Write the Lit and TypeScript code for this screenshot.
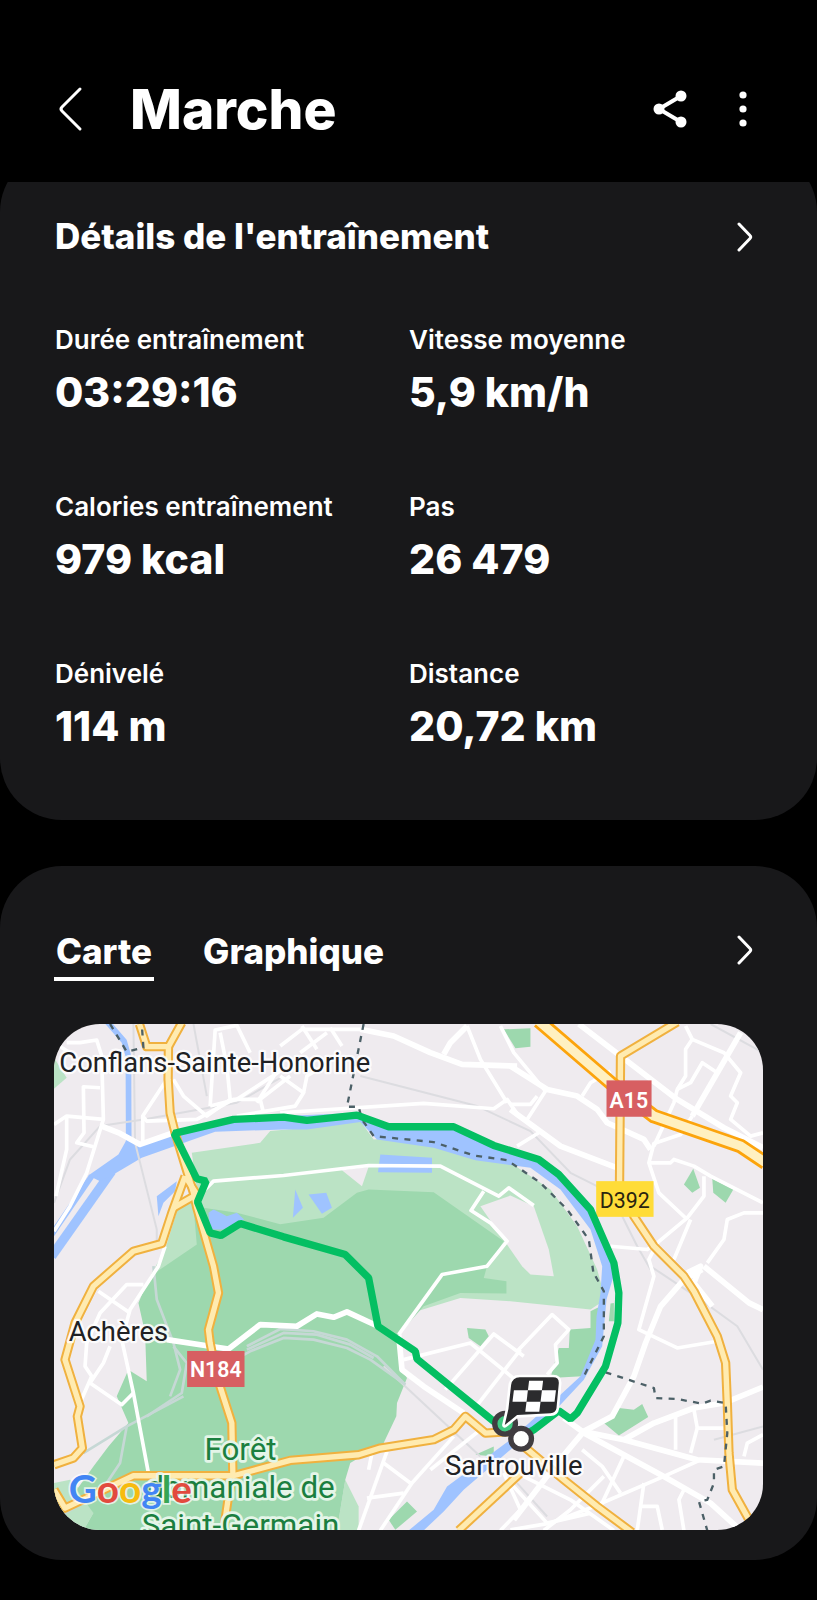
import { LitElement, html, css, svg } from "lit";
import { customElement, state } from "lit/decorators.js";

const METRICS = [
  { label: "Durée entraînement", value: "03:29:16" },
  { label: "Vitesse moyenne", value: "5,9 km/h" },
  { label: "Calories entraînement", value: "979 kcal" },
  { label: "Pas", value: "26 479" },
  { label: "Dénivelé", value: "114 m" },
  { label: "Distance", value: "20,72 km" },
];

const TABS = ["Carte", "Graphique"];

const chevron = html`<svg class="chevron" viewBox="0 0 18 30" aria-hidden="true">
  <path d="M3 2 L14 13.5 Q15.5 15 14 16.5 L3 28" fill="none" stroke="currentColor" stroke-width="3" stroke-linecap="round" stroke-linejoin="round" />
</svg>`;

/* Map geometry, one list per layer; all in the map's own units. */
const LIGHT_GREEN = [
  "425,410 630,380 660,345 770,335 930,315 970,370 1130,360 1210,355 1275,405 1380,440 1500,520 1580,630 1640,760 1665,850 1620,880 1380,855 1230,845 1100,885 1000,1000 300,1000 300,780 345,700 385,570 440,520",
  "860,1542 885,1390 925,1470 925,1542",
  "12,1400 60,1390 110,1440 130,1490 100,1542 12,1542",
  "12,125 50,185 12,218",
];
const DARK_GREEN = [
  "300,780 440,685 430,570 560,590 690,624 820,605 920,530 955,520 1150,528 1360,675 1310,750 1300,785 1368,795 1368,832 1230,830 1120,870 1045,955 1055,1060 1070,1085 1040,1160 1038,1200 1000,1280 900,1340 885,1390 860,1542 100,1542 130,1490 80,1420 130,1350 175,1290 235,1220 200,1140 235,1060 290,1095 285,950 265,860 290,800",
  "1360,40 1440,37 1440,92 1395,97",
  "1900,505 1928,458 1948,515 1925,530",
  "1985,488 2048,520 2025,560 1988,530",
  "1660,1220 1705,1175 1750,1180 1775,1163 1793,1202 1705,1257",
  "1620,885 1650,870 1645,950 1595,1080 1500,1085 1525,995 1555,995 1558,940 1620,935",
  "1680,862 1690,860 1690,915 1675,915",
  "1250,935 1305,940 1315,960 1290,990 1255,965",
  "1070,1455 1100,1485 1035,1540 1015,1510",
  "1275,1315 1330,1290 1330,1320",
];
const LAND = [
  "1290,570 1380,538 1450,570 1495,700 1510,780 1440,775 1415,750",
  "875,462 955,452 935,510",
];
const WATER = [
  "115,478 205,415 230,370 280,385 370,350 550,305 700,300 930,290 1000,325 1210,330 1330,385 1470,430 1610,580 1695,760 1668,850 1655,990 1600,1090 1530,1165 1380,1300 1240,1420 1180,1485 1120,1542 1075,1542 1150,1480 1190,1410 1380,1270 1530,1135 1590,1080 1635,970 1638,900 1650,830 1655,750 1620,640 1530,520 1440,455 1275,432 1150,395 980,370 930,318 770,340 700,340 495,347 275,425 190,475 150,495",
  "320,540 380,495 375,525 340,560 325,600",
  "475,590 490,580 515,592 530,600 560,590 582,610 520,640 480,640",
  "990,415 1145,425 1145,470 983,468",
  "735,520 758,575 728,605",
  "775,535 828,530 845,575 815,593",
];
const ROADS = [
  "12,325 50,300 160,310", "50,80 90,80 140,72 155,120 160,310 110,470 60,570 12,645",
  "150,215 100,212 102,350 80,380 130,392", "278,385 278,300 350,190",
  "278,300 290,315 440,310 550,250 630,250 720,180", "370,190 400,240 470,300 540,250 530,150 510,50",
  "480,270 495,42 560,28 600,110", "630,250 640,290", "50,300 50,400 18,540", "690,150 620,260",
  "480,270 560,250 690,165", "12,80 60,110", "690,90 755,40 930,40", "755,30 800,100", "840,35 875,90",
  "830,50 750,110", "690,180 760,230 735,270 560,300", "760,230 770,180 820,150",
  "690,290 1120,262 1330,278 1370,250 1405,300", "1250,30 1290,130 1370,260", "1350,30 1390,110 1485,225 1430,310",
  "465,520 490,495 700,478 955,448 1170,450 1345,540 1375,515 1450,568",
  "1300,525 1262,583 1320,620 1370,675 1310,750 1175,775 1045,955",
  "1905,30 1925,70 1905,100 1905,180 1880,220 1870,260 1810,390",
  "1925,70 2020,110 2070,170 2040,240 2060,260 2040,310 2100,360 2137,350",
  "1880,220 1920,200 1955,140 2000,170", "1380,265 1440,265 1460,240", "1400,390 1465,350",
  "1595,240 1620,200 1680,165", "1795,440 1860,440 1870,430 1930,450 1980,480 2137,560",
  "1925,300 1890,355 1810,382 1795,440 1825,530 1910,610",
  "1960,480 1960,540 1910,605 1820,680 1795,730 1810,780 1765,940 1880,995 2000,975",
  "1920,610 1870,730", "2137,590 2080,590 2030,610 2020,670 1970,740", "1680,690 1790,700 1820,680",
  "1875,1200 1875,1300", "1930,1180 1940,1235 2020,1235", "1940,1235 1920,1310", "2137,1255 2090,1280 2080,1320",
  "1950,1330 1840,1380 1630,1470 1500,1520 1380,1540", "1720,1320 1650,1470", "1595,1300 1655,1350 1710,1430",
  "1780,1400 1760,1542", "1770,1470 1820,1470 1835,1540", "1900,1420 1885,1450 1900,1542",
  "1380,1400 1490,1520 1620,1490", "1400,1370 1560,1450 1690,1542", "1660,1380 1560,1480 1480,1542",
  "1060,1030 1260,980 1400,1095", "1185,1120 1330,953 1420,1020", "1400,1005 1505,895 1555,940 1515,985 1520,1040 1490,1075",
  "1410,1000 1270,1180", "1290,1240 1140,1360", "1210,1260 1085,1400 990,1542", "1010,1305 925,1542",
  "1000,1340 1080,1400", "950,1445 1060,1430", "965,1310 955,1360", "1360,1370 1410,1480 1350,1542",
  "145,825 240,890", "280,805 230,805 150,890 110,980 105,1050 125,1080 90,1160",
  "180,990 160,1040 120,1100 215,1165 250,1130", "345,690 325,750 240,880 215,970 250,1130 295,1370",
];
const MAIN_ROADS = [
  "155,330 210,352 270,385 370,350", "930,40 1030,60 1140,110 1235,145 1400,150", "1180,115 1200,80 1250,30",
  "1380,150 1490,220 1580,240 1640,280 1670,320 1780,370 1800,400", "1380,280 1530,390 1700,455",
  "1585,24 1710,120 1880,250 2020,335 2137,395", "2070,50 1925,300",
  "1910,770 1950,750 1930,800 1985,870", "1960,750 2095,860 2137,880",
  "1955,760 1900,790 1830,870 1785,980 1750,1080 1685,1200 1600,1245 1520,1340 1390,1510",
  "1540,1205 1595,1245 1720,1270 1940,1330 2137,1340", "1600,1250 1840,1380 1980,1460 2070,1542",
  "1720,1270 1810,1220 1930,1175 2020,1160 2137,1112",
  "1045,955 1055,1060 1120,1110 1240,1190",
  "350,970 480,990 535,998 630,925 740,930 800,893 850,903 890,887 983,930",
];
const RAILS = [
  "250,24 255,380 320,640 320,700", "430,24 470,240", "12,560 60,430 150,330 280,310 560,260 700,180",
  "930,180 1280,270 1440,345 1560,470 1680,530 1760,690 1800,760", "1800,750 1950,850 2060,930 2137,1060",
  "1000,1050 1290,1320", "1980,24 2137,110", "1400,1400 1490,1500", "1990,1270 2137,1230",
];
const FOREST_RAILS = [
  "310,750 320,850 370,980 390,1060 360,1140", "370,990 410,1040 395,1130 290,1200",
  "100,1310 230,1230 400,1140", "230,1230 210,1340 150,1430 30,1500",
  "480,1070 600,1005 700,965 790,970 890,995 960,1030 1065,1105",
  "590,990 690,938 790,945 890,970 980,1020 1065,1105",
  "590,1000 700,950 800,955 900,985 970,1025",
];
const HIGHWAYS = [
  "268,24 290,92 355,92 395,20", "355,92 354,190 360,290 375,350 430,530 440,575 490,750 505,830 475,940 480,980 500,1080 545,1220 548,1370 535,1440 520,1542",
  "405,480 365,590 335,682 250,705 130,810 75,920 45,1030 90,1170 82,1200 97,1295 70,1325 12,1345",
  "370,575 440,535 405,480",
  "12,1420 45,1475 250,1378 550,1378 720,1332 925,1315 990,1295 1150,1270 1210,1240 1245,1200 1305,1250 1385,1245",
  "1420,1290 1540,1390 1640,1470 1745,1548", "1225,1542 1410,1370",
  "1880,18 1710,120 1707,500 1750,600 1810,690 1900,780 1930,825 2000,960 2025,1040 2030,1160 2035,1310 2045,1420 2095,1510",
];
const MOTORWAY = "1465,15 1680,200 1810,300 2070,390 2145,440";
const BORDERS = [
  "940,24 890,272 925,272 935,310 970,360 1150,378 1270,418 1370,432 1470,500 1550,580 1615,670 1630,780 1635,780 1660,825 1660,960 1595,1090",
  "1665,1068 1810,1115 1815,1145 1880,1148 1955,1162 1980,1153 2025,1160 2030,1250 2020,1350 1990,1360 1990,1400 1970,1450 1945,1455 1970,1542",
  "180,24 230,107 280,95 275,24",
];
const ROUTE =
  "1412,1262 1450,1240 1525,1183 1560,1208 1580,1190 1665,1050 1702,920 1705,830 1690,740 1620,580 1525,475 1465,430 1330,388 1210,332 1015,332 920,297 770,313 700,303 550,310 372,352 440,488 468,495 442,557 480,650 512,658 570,622 700,662 885,715 955,785 983,930 1095,1005 1100,1028 1330,1215 1365,1225";

const areas = (list: string[], cls: string) => list.map((p) => svg`<polygon class=${cls} points=${p} />`);
const lines = (list: string[], cls: string) => list.map((p) => svg`<polyline class=${cls} points=${p} />`);

@customElement("route-map")
export class RouteMap extends LitElement {
  static styles = css`
    :host {
      display: block;
      border-radius: 46px;
      overflow: hidden;
      background: #efebef;
    }
    svg {
      display: block;
      width: 100%;
      height: auto;
    }
    text {
      font-family: Roboto, sans-serif;
    }
    polyline {
      fill: none;
      stroke-linejoin: round;
    }
    .land { fill: #efebef; }
    .light { fill: #bbe3c5; }
    .dark { fill: #9dd8ae; }
    .water { fill: #9fc3ff; }
    .arm { stroke: #9fc3ff; stroke-width: 28; }
    .creek { stroke: #9fc3ff; stroke-width: 17; }
    .road { stroke: #ffffff; stroke-width: 11; }
    .main { stroke: #ffffff; stroke-width: 17; }
    .rail { stroke: #dcdce0; stroke-width: 6; }
    .forest-rail { stroke: #c6d8d5; stroke-width: 8; }
    .casing { stroke: #f0b13f; stroke-width: 28; }
    .highway { stroke: #ffebb0; stroke-width: 16; }
    .casing-wide { stroke: #fca40c; stroke-width: 44; }
    .highway-wide { stroke: #fff0c0; stroke-width: 27; }
    .border { stroke: #4c6067; stroke-width: 7; stroke-dasharray: 18 19; }
    .route { stroke: #04bf62; stroke-width: 22; stroke-linejoin: bevel; }
    .place {
      font-size: 82px;
      fill: #202124;
      stroke: #ffffff;
      stroke-opacity: 0.85;
      stroke-width: 14;
      stroke-linejoin: round;
      paint-order: stroke;
    }
    .forest {
      font-size: 94px;
      fill: #1b7f3f;
      stroke: #e4f5e8;
      stroke-width: 16;
      stroke-linejoin: round;
      paint-order: stroke;
      text-anchor: middle;
    }
    .shield-red { fill: #d75f62; }
    .shield-yellow { fill: #ffdc38; }
    .shield-text { font-size: 64px; text-anchor: middle; fill: #ffffff; font-weight: 600; }
    .shield-dark { font-size: 64px; text-anchor: middle; fill: #2a2410; }
    .logo {
      font-family: Lato, sans-serif;
      font-weight: 700;
      font-size: 116px;
      stroke: #ffffff;
      stroke-opacity: 0.7;
      stroke-width: 10;
      paint-order: stroke;
    }
    .blue { fill: #4285f4; }
    .red { fill: #e24a3e; }
    .yellow { fill: #f7bb0f; }
    .green { fill: #36a554; }
    .ring { fill: #ffffff; stroke: #403c40; stroke-width: 16; }
    .ring-end { fill: #3fcb82; stroke: #403c40; stroke-width: 16; }
    .flag { fill: #2b2b2d; stroke: #ffffff; stroke-width: 16; stroke-linejoin: round; paint-order: stroke; }
    .check { fill: #ffffff; }
  `;

  render() {
    return html`<svg viewBox="12 24 2125 1518" role="img" aria-label="Parcours de la marche">
      ${areas(LIGHT_GREEN, "light")} ${areas(DARK_GREEN, "dark")} ${areas(LAND, "land")}
      ${lines(["5,720 185,465"], "arm")} ${lines(["5,655 125,480", "172,18 222,75 235,120 236,400"], "creek")}
      ${areas(WATER, "water")} ${lines(RAILS, "rail")} ${lines(FOREST_RAILS, "forest-rail")}
      ${lines(ROADS, "road")} ${lines(MAIN_ROADS, "main")}
      ${lines(HIGHWAYS, "casing")} ${lines(HIGHWAYS, "highway")}
      ${lines([MOTORWAY], "casing-wide")} ${lines([MOTORWAY], "highway-wide")}
      ${lines(BORDERS, "border")}

      <text class="place" x="28" y="168">Conflans-Sainte-Honorine</text>
      <text class="place" x="56" y="975">Achères</text>
      <text class="place" x="1184" y="1376">Sartrouville</text>
      <text class="forest" x="571" y="1332">Forêt</text>
      <text class="forest" x="571" y="1445">domaniale de</text>
      <text class="forest" x="571" y="1560">Saint-Germain</text>

      <rect class="shield-red" x="1668" y="193" width="135" height="109" />
      <text class="shield-text" x="1735" y="275">A15</text>
      <rect class="shield-yellow" x="1637" y="495" width="172" height="107" />
      <text class="shield-dark" x="1723" y="575">D392</text>
      <rect class="shield-red" x="411" y="1004" width="172" height="108" />
      <text class="shield-text" x="497" y="1083">N184</text>

      ${lines([ROUTE], "route")}
      <circle class="ring-end" cx="1364" cy="1222" r="31" />
      <circle class="ring" cx="1412" cy="1267" r="31" />
      <path class="flag" d="M1408 1083 H1508 Q1526 1083 1525 1101 L1518 1176 Q1516 1190 1500 1191 L1400 1196 L1363 1226 L1374 1178 L1382 1106 Q1386 1083 1408 1083 Z" />
      <g transform="translate(1394 1093) skewX(-7)">
        <rect class="check" x="42" y="0" width="42" height="29" />
        <rect class="check" x="0" y="29" width="42" height="34" />
        <rect class="check" x="84" y="29" width="42" height="34" />
        <rect class="check" x="42" y="63" width="42" height="30" />
      </g>

      <text class="logo" x="56" y="1461"><tspan class="blue">G</tspan><tspan class="red">o</tspan><tspan class="yellow">o</tspan><tspan class="blue">g</tspan><tspan class="green">l</tspan><tspan class="red">e</tspan></text>
    </svg>`;
  }
}

@customElement("app-root")
export class AppRoot extends LitElement {
  static styles = css`
    :host {
      display: block;
      min-height: 100vh;
      background: #000000;
      color: #ffffff;
      font-family: Inter, "Liberation Sans", sans-serif;
    }
    button {
      display: flex;
      align-items: center;
      padding: 0;
      border: 0;
      background: none;
      color: inherit;
      font: inherit;
      cursor: pointer;
    }
    .bar {
      display: flex;
      align-items: center;
      box-sizing: border-box;
      height: 182px;
      padding: 36px 56px 0;
    }
    .title {
      flex: 1;
      margin: 0 0 0 46px;
      font-size: 55px;
      line-height: 68px;
      font-weight: 800;
    }
    .back { width: 28px; height: 46px; }
    .share { width: 36px; height: 42px; margin-right: 46px; }
    .more { width: 16px; height: 42px; margin-right: 10px; }
    .scroll { overflow: hidden; }
    .card {
      border-radius: 62px;
      background: #18181a;
    }
    .details {
      margin-top: -32px;
      padding: 62px 54px 64px;
    }
    .head {
      display: flex;
      align-items: flex-start;
      justify-content: space-between;
      padding-right: 9px;
    }
    .heading {
      margin: 0;
      padding-left: 1px;
      font-size: 35px;
      line-height: 48px;
      font-weight: 800;
    }
    .open { height: 50px; }
    .chevron {
      width: 18px;
      height: 30px;
    }
    .metrics {
      display: grid;
      grid-template-columns: 1fr 1fr;
      row-gap: 67px;
      margin: 60px 0 0;
      padding-left: 1px;
    }
    .label {
      font-size: 26px;
      line-height: 36px;
      font-weight: 600;
    }
    .value {
      margin: 4px 0 0;
      font-size: 41px;
      line-height: 60px;
      font-weight: 800;
    }
    .map-card {
      margin-top: 46px;
      padding: 59px 54px 30px;
    }
    .tabs {
      display: flex;
      gap: 47px;
    }
    .tab {
      padding: 0 2px;
      border-bottom: 4px solid transparent;
      font-size: 35px;
      line-height: 52px;
      font-weight: 800;
    }
    .tab.active { border-color: #ffffff; }
    .map { margin-top: 43px; }
  `;

  @state() private tab = TABS[0];

  render() {
    return html`
      <header class="bar">
        <button class="back" aria-label="Retour">
          <svg width="28" height="46" viewBox="0 0 28 46" aria-hidden="true">
            <path d="M24 3 L6 21 Q4 23 6 25 L24 43" fill="none" stroke="currentColor" stroke-width="3" stroke-linecap="round" />
          </svg>
        </button>
        <h1 class="title">Marche</h1>
        <button class="share" aria-label="Partager">
          <svg width="36" height="42" viewBox="0 0 36 42" aria-hidden="true">
            <path d="M28 8 L6 21 L28 34" fill="none" stroke="currentColor" stroke-width="4" />
            <circle cx="28" cy="8" r="5.5" fill="currentColor" />
            <circle cx="6" cy="21" r="5.5" fill="currentColor" />
            <circle cx="28" cy="34" r="5.5" fill="currentColor" />
          </svg>
        </button>
        <button class="more" aria-label="Plus d'options">
          <svg width="16" height="42" viewBox="0 0 16 42" aria-hidden="true">
            <circle cx="8" cy="7" r="3.6" fill="currentColor" />
            <circle cx="8" cy="21" r="3.6" fill="currentColor" />
            <circle cx="8" cy="35" r="3.6" fill="currentColor" />
          </svg>
        </button>
      </header>
      <main class="scroll">
        <section class="card details">
          <div class="head">
            <h2 class="heading">Détails de l'entraînement</h2>
            <button class="open" aria-label="Voir les détails">${chevron}</button>
          </div>
          <dl class="metrics">
            ${METRICS.map(
              (m) => html`<div>
                <dt class="label">${m.label}</dt>
                <dd class="value">${m.value}</dd>
              </div>`,
            )}
          </dl>
        </section>
        <section class="card map-card">
          <div class="head">
            <div class="tabs" role="tablist">
              ${TABS.map(
                (t) => html`<button
                  class="tab ${t === this.tab ? "active" : ""}"
                  role="tab"
                  aria-selected=${t === this.tab}
                  @click=${() => (this.tab = t)}
                >${t}</button>`,
              )}
            </div>
            <button class="open" aria-label="Ouvrir la carte">${chevron}</button>
          </div>
          <route-map class="map"></route-map>
        </section>
      </main>
    `;
  }
}
